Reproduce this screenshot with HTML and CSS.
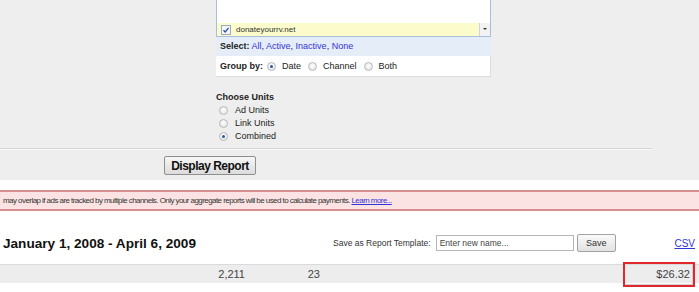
FILE: index.html
```html
<!DOCTYPE html>
<html>
<head>
    <title>Report Options</title>
    <link rel="stylesheet" href="styles.css">
</head>
<body>
    <div class="panel">
        <div class="options">
            <div class="listbox">
                <div class="list-item">
                    <span class="checkbox">
                        <svg viewBox="0 0 8 8" width="8" height="8"><path d="M1.5 4.2 L3.2 6 L6.6 1.8" fill="none" stroke="#2c4f9e" stroke-width="1.3"/></svg>
                    </span>
                    <span class="item-name">donateyourrv.net</span>
                    <span class="drop-arrow"></span>
                </div>
            </div>
            <div class="select-row">
                <b>Select:</b> <a href="#">All</a>, <a href="#">Active</a>, <a href="#">Inactive</a>, <a href="#">None</a>
            </div>
            <div class="group-row">
                <b>Group by:</b>
                <span class="radio checked"></span><span class="opt">Date</span>
                <span class="radio"></span><span class="opt">Channel</span>
                <span class="radio"></span><span class="opt">Both</span>
            </div>
        </div>

        <div class="units">
            <div class="units-title">Choose Units</div>
            <div class="unit"><span class="radio"></span>Ad Units</div>
            <div class="unit"><span class="radio"></span>Link Units</div>
            <div class="unit"><span class="radio checked"></span>Combined</div>
        </div>

        <div class="divider"></div>

        <button class="display-btn">Display Report</button>
    </div>

    <div class="notice">
        may overlap if ads are tracked by multiple channels. Only your aggregate reports will be used to calculate payments. <a href="#">Learn more...</a>
    </div>

    <div class="report-head">
        <h1>January 1, 2008 - April 6, 2009</h1>
        <span class="template-label">Save as Report Template:</span>
        <input class="template-input" type="text" placeholder="Enter new name...">
        <button class="save-btn">Save</button>
        <a class="csv" href="#">CSV</a>
    </div>

    <div class="totals">
        <div class="cell col-a">2,211</div>
        <div class="cell col-b">23</div>
        <div class="cell col-total">$26.32
            <div class="highlight"></div>
        </div>
    </div>
</body>
</html>
```

FILE: styles.css
```css
body {
    margin: 0;
    width: 699px;
    height: 292px;
    overflow: hidden;
    font-family: "Liberation Sans", Arial, sans-serif;
    color: #222;
    background: #fff;
}
a {
    color: #3434d8;
    text-decoration: none;
}

/* Top options panel */
.panel {
    background-color: #eeeeee;
    height: 180px;
    overflow: hidden;
}
.options {
    margin-left: 216px;
    width: 275px;
}
.listbox {
    height: 37px;
    box-sizing: border-box;
    background: white;
    border: 1px solid #a9bedc;
    border-top: none;
    display: flex;
    flex-direction: column;
    justify-content: flex-end;
}
.list-item {
    height: 13px;
    background-color: #fbfbcb;
    display: flex;
    align-items: center;
    font-size: 8px;
    color: #333;
    position: relative;
}
.checkbox {
    width: 8px;
    height: 8px;
    margin-left: 4px;
    margin-right: 5px;
    border: 1px solid #9aa8c2;
    background: #f4f6fb;
    display: flex;
}
.item-name {
    flex: 1;
}
.drop-arrow {
    width: 10px;
    height: 13px;
    background: #f2f2f2;
    border-left: 1px solid #c9d3e3;
    position: relative;
}
.drop-arrow::after {
    content: "";
    position: absolute;
    left: 3px;
    top: 5px;
    border-left: 2px solid transparent;
    border-right: 2px solid transparent;
    border-top: 2px solid #333;
}
.select-row {
    height: 19px;
    line-height: 19px;
    padding-left: 4px;
    background-color: #e5edf9;
    font-size: 9px;
}
.group-row {
    height: 20px;
    padding-left: 4px;
    background: white;
    border-right: 1px solid #dcdcdc;
    border-bottom: 1px solid #dcdcdc;
    display: flex;
    align-items: center;
    font-size: 9px;
}
.group-row b {
    margin-right: 4px;
}
.group-row .opt {
    margin-left: 6px;
    margin-right: 7px;
}
.radio {
    display: inline-block;
    width: 7px;
    height: 7px;
    border-radius: 50%;
    border: 1px solid #b9b9b9;
    background: radial-gradient(circle at 50% 40%, #fff, #dedede);
    position: relative;
    flex: none;
}
.radio.checked::after {
    content: "";
    position: absolute;
    left: 2px;
    top: 2px;
    width: 3px;
    height: 3px;
    border-radius: 50%;
    background: #2a5aa6;
}

.units {
    margin-left: 216px;
    margin-top: 14px;
    font-size: 9px;
    line-height: 13px;
}
.units-title {
    font-weight: bold;
}
.unit {
    display: flex;
    align-items: center;
    padding-left: 3px;
}
.unit .radio {
    margin-right: 7px;
}
.divider {
    width: 652px;
    margin-top: 5px;
    border-top: 1px solid #d6d6d6;
    border-bottom: 1px solid #f9f9f9;
}
.display-btn {
    display: block;
    margin: 6px 0 0 164px;
    width: 92px;
    height: 19px;
    padding: 0;
    font-family: "Liberation Sans", Arial, sans-serif;
    font-size: 12px;
    font-weight: bold;
    letter-spacing: -0.5px;
    color: #111;
    background: linear-gradient(#f6f6f6, #dcdcdc);
    border: 1px solid #8f8f8f;
    border-radius: 2px;
}

/* Warning notice */
.notice {
    margin-top: 10px;
    height: 17px;
    line-height: 17px;
    padding-left: 3px;
    background-color: #fce3e3;
    border-top: 2px solid #d58f90;
    border-bottom: 2px solid #d58f90;
    font-size: 8px;
    letter-spacing: -0.56px;
    color: #333;
    white-space: nowrap;
}
.notice a {
    text-decoration: underline;
}

/* Report header */
.report-head {
    margin-top: 21px;
    height: 22px;
    display: flex;
    align-items: center;
    padding-left: 3px;
}
.report-head h1 {
    margin: 0;
    width: 330px;
    font-size: 13.6px;
    font-weight: bold;
    color: #111;
}
.template-label {
    font-size: 8.5px;
    color: #333;
}
.template-input {
    margin-left: 5px;
    width: 138px;
    height: 16px;
    box-sizing: border-box;
    padding: 0 3px;
    border: 1px solid #b5b5b5;
    font-family: "Liberation Sans", Arial, sans-serif;
    font-size: 8.5px;
}
.template-input::placeholder {
    color: #444;
}
.save-btn {
    margin-left: 3px;
    width: 39px;
    height: 18px;
    padding: 0;
    font-family: "Liberation Sans", Arial, sans-serif;
    font-size: 9px;
    color: #333;
    background: linear-gradient(#fafafa, #e2e2e2);
    border: 1px solid #a2a2a2;
    border-radius: 2px;
}
.csv {
    margin-left: auto;
    margin-right: 4px;
    font-size: 10px;
    text-decoration: underline;
}

/* Totals row */
.totals {
    margin-top: 10px;
    height: 18px;
    background-color: #ededed;
    border-top: 1px solid #dadada;
    display: flex;
    align-items: center;
    font-size: 11px;
    color: #444;
}
.cell {
    text-align: right;
}
.col-a {
    margin-left: 185px;
    width: 60px;
}
.col-b {
    width: 75px;
}
.col-total {
    margin-left: auto;
    margin-right: 9px;
    width: 64px;
    position: relative;
}
.highlight {
    position: absolute;
    left: -3px;
    right: -5px;
    top: -6px;
    bottom: -7px;
    border: 2px solid #e2282c;
    box-shadow: inset -1px -1px 0 #cfcfcf;
}
```
